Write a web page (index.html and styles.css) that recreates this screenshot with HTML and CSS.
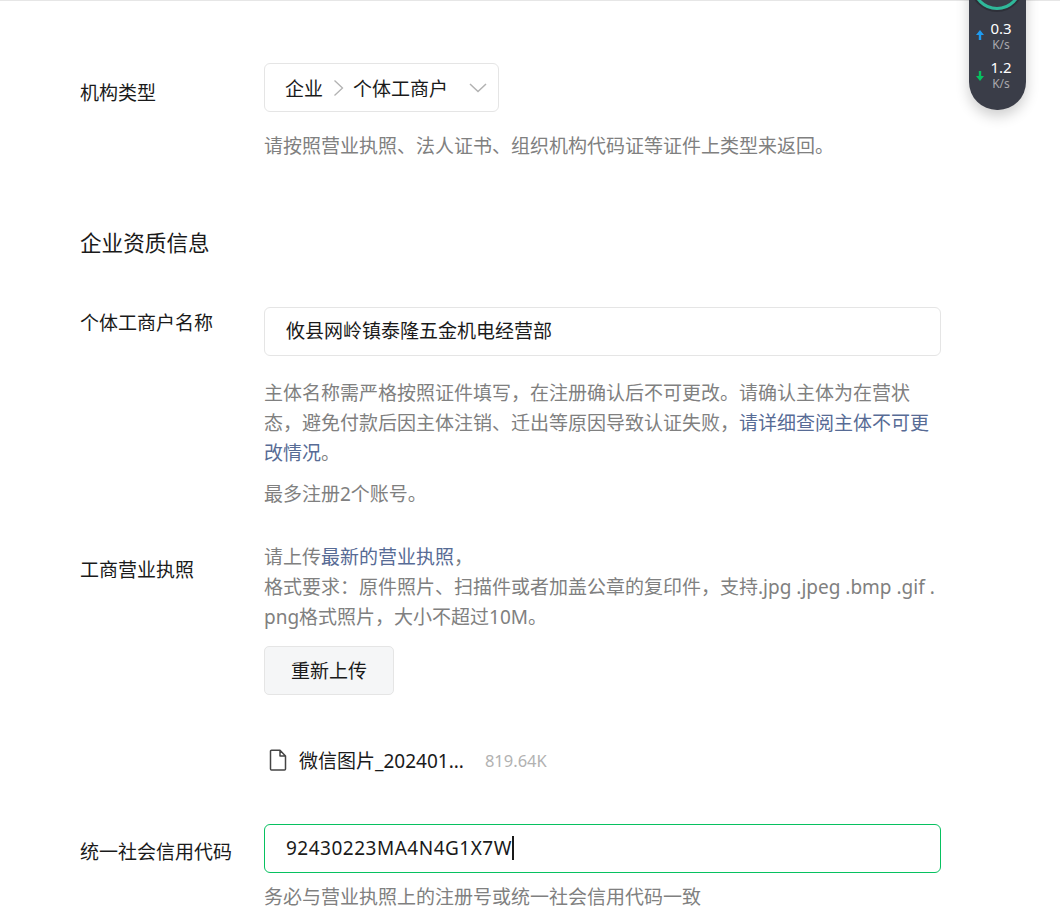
FILE: index.html
```html
<!DOCTYPE html>
<html lang="zh-CN">
<head>
<meta charset="utf-8">
<title>企业资质信息</title>
<link rel="stylesheet" href="styles.css">
</head>
<body>
<div class="topline"></div>
<main class="form">
  <section class="row row-type">
    <div class="label label-type">机构类型</div>
    <div class="field">
      <div class="select">
        <span>企业</span>
        <svg class="sep" width="12" height="18" viewBox="0 0 12 18"><path d="M1.500 1.500 9.500 9l-8 7.500" fill="none" stroke="#b2b2b2" stroke-width="1.300"/></svg>
        <span>个体工商户</span>
        <svg class="chev" width="18" height="10" viewBox="0 0 18 10"><path d="M1 1l8 7.500L17 1" fill="none" stroke="#b2b2b2" stroke-width="1.500"/></svg>
      </div>
      <p class="tip tip-type">请按照营业执照、法人证书、组织机构代码证等证件上类型来返回。</p>
    </div>
  </section>

  <h2 class="heading">企业资质信息</h2>

  <section class="row row-name">
    <div class="label label-name">个体工商户名称</div>
    <div class="field">
      <div class="input">攸县网岭镇泰隆五金机电经营部</div>
      <p class="tip tip-name">主体名称需严格按照证件填写，在注册确认后不可更改。请确认主体为在营状态，避免付款后因主体注销、迁出等原因导致认证失败，<a class="link">请详细查阅主体不可更改情况</a>。</p>
      <p class="tip tip-max">最多注册2个账号。</p>
    </div>
  </section>

  <section class="row row-license">
    <div class="label label-license">工商营业执照</div>
    <div class="field">
      <p class="tip tip-license">请上传<a class="link">最新的营业执照</a>，<br>格式要求：原件照片、扫描件或者加盖公章的复印件，支持.jpg .jpeg .bmp .gif .png格式照片，大小不超过10M。</p>
      <button class="btn" type="button">重新上传</button>
      <div class="file">
        <svg class="file-icon" width="18" height="22" viewBox="0 0 18 22"><path d="M1.500 2.200a1 1 0 0 1 1-1H11L16.500 7v13a1 1 0 0 1-1 1h-13a1 1 0 0 1-1-1zM11 1.200V7h5.500" fill="none" stroke="#444" stroke-width="1.500" stroke-linejoin="round"/></svg>
        <span class="file-name">微信图片_202401...</span>
        <span class="file-size">819.64K</span>
      </div>
    </div>
  </section>

  <section class="row row-code">
    <div class="label label-code">统一社会信用代码</div>
    <div class="field">
      <div class="input input-focus">92430223MA4N4G1X7W<span class="caret"></span></div>
      <p class="tip tip-code">务必与营业执照上的注册号或统一社会信用代码一致</p>
    </div>
  </section>
</main>

<aside class="speed">
  <div class="ring"></div>
  <div class="speed-row">
    <svg class="arrow-up" width="8" height="10" viewBox="0 0 8 10"><path d="M4 0 8 5H5.200v5H2.800V5H0z" fill="#1e9bf0"/></svg>
    <div class="speed-val"><span class="num">0.3</span><span class="unit">K/s</span></div>
  </div>
  <div class="speed-row">
    <svg width="8" height="10" viewBox="0 0 8 10"><path d="M4 10 8 5H5.200V0H2.800v5H0z" fill="#07c160"/></svg>
    <div class="speed-val"><span class="num">1.2</span><span class="unit">K/s</span></div>
  </div>
</aside>
</body>
</html>
```

FILE: styles.css
```css
* { box-sizing: border-box; }
html, body { margin: 0; height: 908px; overflow: hidden; background: #fff; }
body {
  position: relative;
  font-family: "Noto Sans", "Noto Sans CJK SC", sans-serif;
  font-size: 19px;
  color: #1a1a1a;
}
.topline { height: 1px; background: #e6e6e6; }
.form { padding: 62px 119px 0 80px; }
.row { display: grid; grid-template-columns: 184px 677px; }
.label { line-height: 28px; }
.label-type { padding-top: 16px; }
.label-name { padding-top: 2px; }
.label-license { padding-top: 14px; }
.label-code { padding-top: 14px; }
.field { min-width: 0; }
.select {
  display: inline-flex; align-items: center;
  width: 235px; height: 49px;
  padding: 0 11px 0 20px;
  border: 1px solid #e5e5e5; border-radius: 6px;
}
.sep { margin: 0 8px 0 10px; }
.chev { margin-left: auto; }
.tip { margin: 0; color: #808080; line-height: 30px; word-break: break-all; }
.tip-type { margin-top: 19px; }
.link { color: #576b95; }
.heading { margin: 67px 0 0; font-size: 21.600px; font-weight: 400; line-height: 30px; }
.row-name { margin-top: 49px; }
.input {
  height: 49px; padding: 0 21px;
  border: 1px solid #e5e5e5; border-radius: 6px;
  line-height: 47px;
}
.tip-name { margin-top: 22px; }
.tip-max { margin-top: 11px; }
.row-license { margin-top: 33px; }
.btn {
  display: block; margin-top: 14px;
  width: 130px; height: 49px; padding: 0 0 2px;
  font: inherit; color: #1a1a1a;
  background: #f5f6f7; border: 1px solid #e5e5e5; border-radius: 5px;
}
.file { display: flex; align-items: center; margin-top: 54px; height: 22px; padding-left: 5px; }
.file-icon { margin-right: 12px; }
.file-size { margin-left: 21px; font-size: 16.500px; color: #b2b2b2; }
.row-code { margin-top: 53px; }
.input-focus { border-color: #07c160; letter-spacing: .5px; }
.caret { display: inline-block; width: 2px; height: 24px; background: #1a1a1a; vertical-align: -5px; }
.tip-code { margin-top: 9px; }

.speed {
  position: absolute; right: 34px; top: -60px;
  width: 57px; height: 170px;
  padding-top: 80px;
  background: #3a3d48; border-radius: 0 0 28px 28px;
  box-shadow: 0 6px 14px rgba(0,0,0,.2);
}
.ring {
  position: absolute; left: 3px; top: 20px;
  width: 50px; height: 50px;
  border: 3px solid #2fb89a; border-radius: 50%;
  box-shadow: 0 0 0 2px #2e3039;
}
.speed-row { display: flex; align-items: center; gap: 4px; padding-left: 7px; height: 33px; margin-bottom: 6px; }
.arrow-up { margin-top: -4px; }
.speed-val { display: flex; flex-direction: column; align-items: center; width: 26px; }
.num { font-size: 15px; line-height: 16px; color: #fff; }
.unit { margin-top: 1px; font-size: 12px; line-height: 16px; color: #a8a8ad; }
```
